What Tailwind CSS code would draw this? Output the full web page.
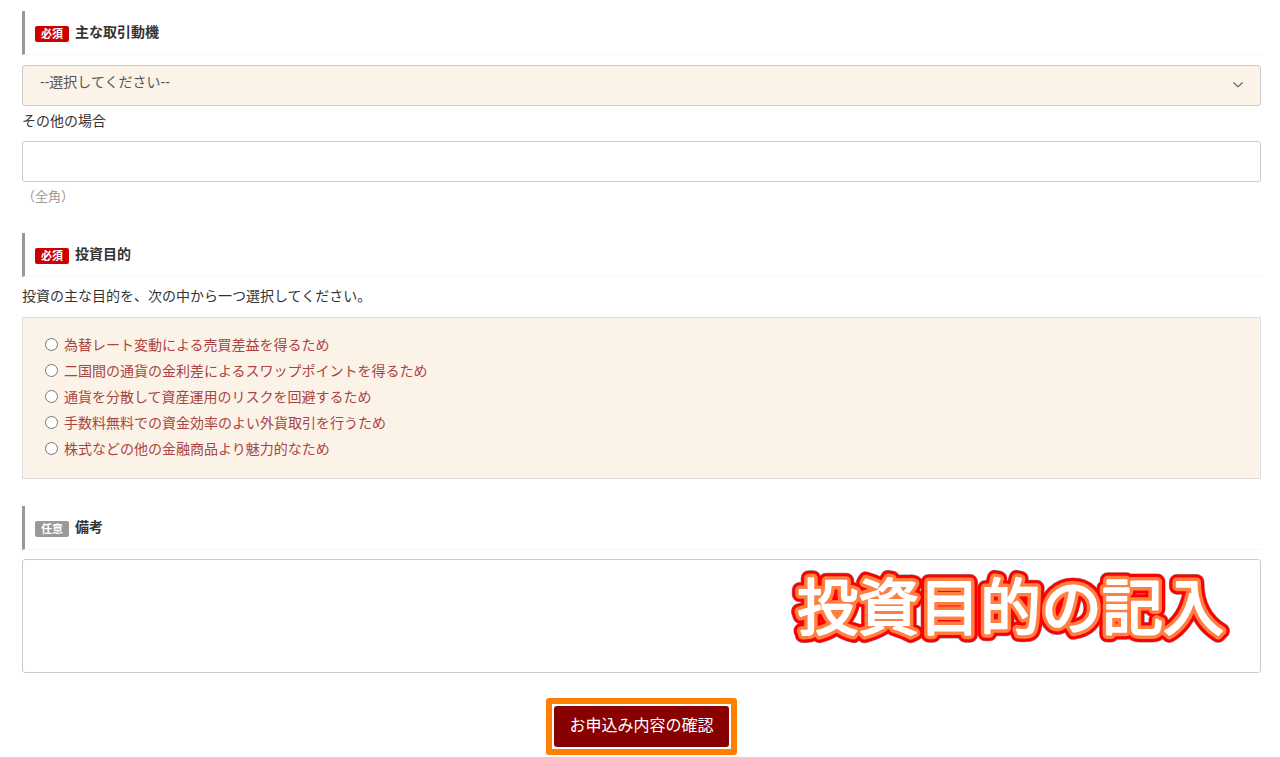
<!DOCTYPE html>
<html lang="ja">
<head>
  <meta charset="UTF-8">
  <meta name="viewport" content="width=device-width, initial-scale=1.0">
  <title>お申込みフォーム</title>
  <script src="https://cdn.jsdelivr.net/npm/@tailwindcss/browser@4"></script>
</head>
<body class="bg-white text-[#333] text-sm font-['Liberation_Sans','Noto_Sans_CJK_JP',sans-serif]">
  <main class="pl-[22px] pr-[19px] pt-[11px]">
    <form>
      <section>
        <h2 class="flex items-center gap-[6px] h-11 pl-[10px] pb-[2px] border-l-3 border-l-[#999] border-b border-b-[#eee] [border-bottom-style:dotted] font-bold">
          <span class="mt-1 w-[34px] h-4 rounded-[2px] bg-[#c00] text-white text-[11px] leading-4 text-center">必須</span>
          <label for="motive">主な取引動機</label>
        </h2>
        <div class="relative mt-[10px]">
          <select id="motive" class="block w-full h-[41px] pl-[17px] pr-10 pb-2 appearance-none border border-[#ccc] rounded-[3px] bg-[#fcf3e8] text-[#555]">
            <option>--選択してください--</option>
          </select>
          <svg class="absolute right-[17px] top-4 w-3 h-2 pointer-events-none" viewBox="0 0 12 8" fill="none" stroke="#555" stroke-width="1.1" aria-hidden="true">
            <path d="M1.5 1.5 L6 5.8 L10.5 1.5"/>
          </svg>
        </div>
        <label for="other" class="block mt-1 leading-[22px]">その他の場合</label>
        <input type="text" id="other" class="block mt-[9px] w-full h-[41px] px-4 border border-[#ccc] rounded-[3px]">
        <p class="mt-1 leading-[22px] text-[#999] text-[13px]">（全角）</p>
      </section>

      <section class="mt-[25px]">
        <h2 class="flex items-center gap-[6px] h-11 pl-[10px] pb-[2px] border-l-3 border-l-[#999] border-b border-b-[#eee] [border-bottom-style:dotted] font-bold">
          <span class="mt-1 w-[34px] h-4 rounded-[2px] bg-[#c00] text-white text-[11px] leading-4 text-center">必須</span>
          投資目的
        </h2>
        <p class="mt-2 leading-[22px]">投資の主な目的を、次の中から一つ選択してください。</p>
        <div class="mt-[10px] pl-[22px] pt-[14px] pb-4 border border-[#ddd] bg-[#fcf3e8] text-[#a94442] leading-[26px]">
          <label class="flex items-center gap-[6px]"><input type="radio" name="purpose" class="w-[13px] h-[13px] mb-[2px]">為替レート変動による売買差益を得るため</label>
          <label class="flex items-center gap-[6px]"><input type="radio" name="purpose" class="w-[13px] h-[13px] mb-[2px]">二国間の通貨の金利差によるスワップポイントを得るため</label>
          <label class="flex items-center gap-[6px]"><input type="radio" name="purpose" class="w-[13px] h-[13px] mb-[2px]">通貨を分散して資産運用のリスクを回避するため</label>
          <label class="flex items-center gap-[6px]"><input type="radio" name="purpose" class="w-[13px] h-[13px] mb-[2px]">手数料無料での資金効率のよい外貨取引を行うため</label>
          <label class="flex items-center gap-[6px]"><input type="radio" name="purpose" class="w-[13px] h-[13px] mb-[2px]">株式などの他の金融商品より魅力的なため</label>
        </div>
      </section>

      <section class="mt-[27px]">
        <h2 class="flex items-center gap-[6px] h-11 pl-[10px] pb-[2px] border-l-3 border-l-[#999] border-b border-b-[#eee] [border-bottom-style:dotted] font-bold">
          <span class="mt-1 w-[34px] h-4 rounded-[2px] bg-[#999] text-white text-[11px] leading-4 text-center">任意</span>
          <label for="note">備考</label>
        </h2>
        <div class="relative mt-[9px]">
          <textarea id="note" class="block w-full h-[114px] p-4 border border-[#ccc] rounded-[3px] resize-none"></textarea>
          <!-- caption: white fill, orange inner outline, red outer outline -->
          <svg class="absolute right-6 top-1 w-[450px] h-[90px] pointer-events-none font-normal text-[61px]" viewBox="0 0 450 90" stroke-linejoin="round" role="img" aria-label="投資目的の記入">
            <defs><text id="caption" x="10" y="67">投資目的の記入</text></defs>
            <use href="#caption" fill="#999" stroke="#999" stroke-width="16"/>
            <use href="#caption" fill="#f00" stroke="#f00" stroke-width="15"/>
            <use href="#caption" fill="#ff7f40" stroke="#ff7f40" stroke-width="9"/>
            <use href="#caption" fill="#fff" stroke="#fff" stroke-width="2"/>
          </svg>
        </div>
      </section>

      <div class="flex justify-center mt-[25px]">
        <div class="border-6 border-[#ff8000] rounded-[3px] p-[2px]">
          <button type="submit" class="block w-[175px] h-[41px] pb-[2px] rounded-[3px] bg-[#880000] text-white text-base">お申込み内容の確認</button>
        </div>
      </div>
    </form>
  </main>
</body>
</html>
